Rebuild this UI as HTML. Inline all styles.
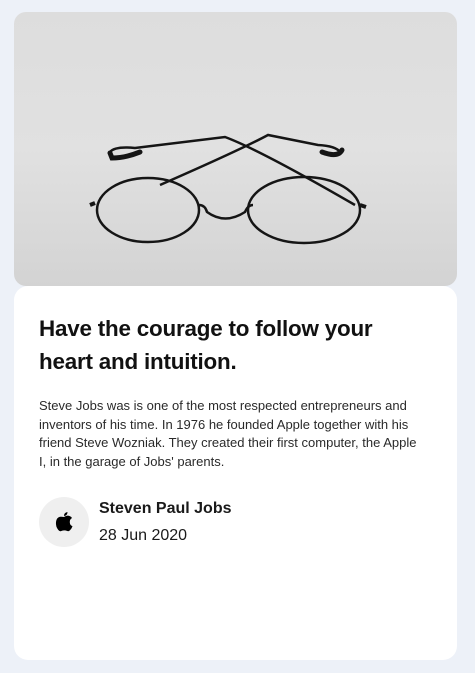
<!DOCTYPE html>
<html><head><style>
body{margin:0;background:#edf1f8;width:475px;height:673px;overflow:hidden;font-family:"Liberation Sans",sans-serif;position:relative}
.img{position:absolute;left:14px;top:12px;width:443px;height:274px;border-radius:12px;overflow:hidden;background:linear-gradient(180deg,#dddddd 0%,#e1e1e1 50%,#d3d3d3 100%)}
.card{position:absolute;left:14px;top:286px;width:443px;height:374px;background:#fff;border-radius:14px}
h1{position:absolute;left:25px;top:26px;margin:0;font-size:22.4px;line-height:33px;font-weight:bold;color:#111;letter-spacing:-0.2px;width:360px}
p{position:absolute;left:25px;top:111px;margin:0;font-size:13px;line-height:18.6px;color:#2a2a2a;width:384px}
.av{position:absolute;left:25px;top:211px;width:50px;height:50px;border-radius:50%;background:#efefef}
.n{position:absolute;left:85px;top:214px;font-size:16px;font-weight:bold;color:#1a1a1a}
.d{position:absolute;left:85px;top:241px;font-size:16px;color:#1a1a1a}
</style></head><body>
<div class="img"><svg width="443" height="274" viewBox="14 12 443 274" fill="none" stroke="#151515">
<path d="M110 152 Q115 146 135 148 L225 137 Q260 150 355 205" stroke-width="2.5"/>
<path d="M110 153 L112 158 Q125 158 140 152" stroke-width="5" stroke-linecap="round"/>
<path d="M340 152 Q336 146 318 145 L268 135 Q240 150 160 185" stroke-width="2.5"/>
<path d="M342 150 Q338 158 322 152" stroke-width="5" stroke-linecap="round"/>
<ellipse cx="148" cy="210" rx="51" ry="32" stroke-width="2.5"/>
<ellipse cx="304" cy="210" rx="56" ry="33" stroke-width="2.5"/>
<path d="M199 205 Q205 205 207 212 Q225 225 245 212 Q248 205 253 205" stroke-width="2.5"/>
<path d="M95 203 l-5 2 M360 205 l6 2" stroke-width="4"/>
</svg></div>
<div class="card">
<h1>Have the courage to follow your heart and intuition.</h1>
<p>Steve Jobs was is one of the most respected entrepreneurs and inventors of his time. In 1976 he founded Apple together with his friend Steve Wozniak. They created their first computer, the Apple I, in the garage of Jobs' parents.</p>
<div class="av"><svg width="50" height="50" viewBox="0 0 50 50"><path fill="#000" d="M25 20 Q28 18 30.5 19 Q32.5 19.8 33 21 Q30.5 22.5 30.8 25.5 Q31 28.3 33.5 29.3 Q32.5 32 31 33.3 Q29.8 34.6 28.3 34 Q26.5 33.3 25 33.4 Q23.3 33.5 22 34.1 Q20.6 34.6 19.3 33 Q16.5 29.5 17 25 Q17.6 20.5 21 19.8 Q23 19.5 25 20Z M25 19 Q25 15.5 28.5 15 Q28.5 18.5 25 19Z"/></svg></div>
<div class="n">Steven Paul Jobs</div>
<div class="d">28 Jun 2020</div>
</div>
</body></html>
